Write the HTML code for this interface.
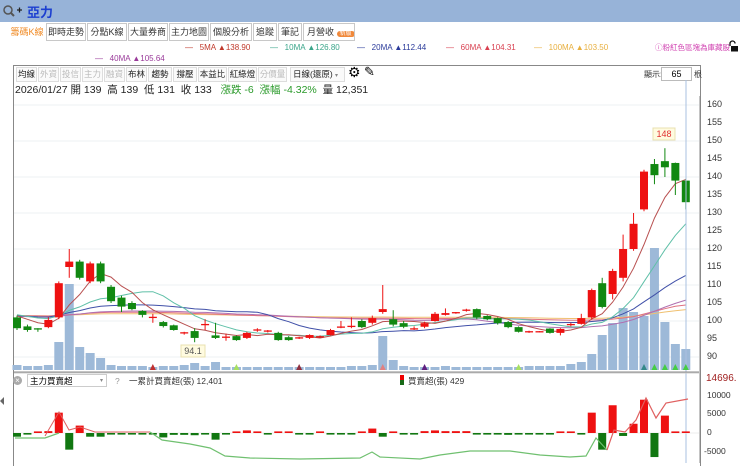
<!DOCTYPE html>
<html><head><meta charset="utf-8">
<style>
body{margin:0;width:740px;height:463px;overflow:hidden;background:#fff;font-family:"Liberation Sans","Noto Sans CJK TC",sans-serif;position:relative}
.a{position:absolute;white-space:nowrap}
.top{position:absolute;left:0;top:0;width:740px;height:22px;background:#97b3d8}
.tab{position:absolute;top:23px;height:16px;border:1px solid #c8c8c8;font-size:9px;line-height:16px;text-align:center;color:#333;background:#fff;white-space:nowrap;overflow:hidden}
.btn{position:absolute;top:67px;height:13px;border:1px solid #ddd;font-size:8.5px;line-height:13px;text-align:center;color:#222;background:#fafafa;white-space:nowrap;overflow:hidden}
.btn.d{color:#bbb}
.ax{position:absolute;left:707px;font-size:9px;color:#333}
.lg{position:absolute;top:43px;font-size:8px;white-space:nowrap}
</style></head><body>
<div class="top"></div>
<svg class="a" style="left:2px;top:4px" width="22" height="14"><circle cx="6" cy="6" r="4" fill="none" stroke="#555" stroke-width="1.5"/><line x1="9" y1="9" x2="12" y2="12" stroke="#555" stroke-width="2"/><path d="M15 6h5M17.5 3.5v5" stroke="#222" stroke-width="1.3"/></svg>
<div class="a" style="left:27px;top:2px;font-size:13px;font-weight:bold;color:#1c3fd0">亞力</div>

<div class="tab" style="left:8px;width:36px;color:#f08a24;border-color:#fff">籌碼K線</div>
<div class="tab" style="left:46px;width:38px">即時走勢</div>
<div class="tab" style="left:87px;width:38px">分點K線</div>
<div class="tab" style="left:128px;width:38px">大量券商</div>
<div class="tab" style="left:169px;width:38px">主力地圖</div>
<div class="tab" style="left:210px;width:40px">個股分析</div>
<div class="tab" style="left:253px;width:22px">追蹤</div>
<div class="tab" style="left:278px;width:22px">筆記</div>
<div class="tab" style="left:303px;width:47px;text-align:left;padding-left:3px">月營收 <span style="background:#f0883a;color:#fff;border-radius:6px;font-size:6px;padding:0 3px">新版</span></div>

<div class="lg" style="left:185px;color:#c0392b">— &nbsp; 5MA ▲138.90</div>
<div class="lg" style="left:270px;color:#3aa58a">— &nbsp; 10MA ▲126.80</div>
<div class="lg" style="left:357px;color:#2a3a9a">— &nbsp; 20MA ▲112.44</div>
<div class="lg" style="left:446px;color:#d94050">— &nbsp; 60MA ▲104.31</div>
<div class="lg" style="left:534px;color:#e8b040">— &nbsp; 100MA ▲103.50</div>
<div class="lg" style="left:655px;top:42px;color:#d040b0;font-size:7.5px">ⓘ粉紅色區塊為庫藏股</div>
<svg class="a" style="left:728px;top:40px" width="11" height="12"><path d="M2 6V3.5a2.5 2.5 0 0 1 5 0" fill="none" stroke="#111" stroke-width="1.3"/><rect x="3" y="6" width="7" height="5.5" fill="#111"/></svg>
<div class="lg" style="left:95px;top:54px;color:#9a3a9a">— &nbsp; 40MA ▲105.64</div>

<div class="a" style="left:13px;top:65px;width:686px;height:400px;border:1px solid #888;border-bottom:none"></div>
<div class="btn" style="left:16px;width:19px">均線</div>
<div class="btn d" style="left:38px;width:19px">外資</div>
<div class="btn d" style="left:60px;width:19px">投信</div>
<div class="btn d" style="left:82px;width:19px">主力</div>
<div class="btn d" style="left:104px;width:19px">融資</div>
<div class="btn" style="left:126px;width:19px">布林</div>
<div class="btn" style="left:148px;width:22px">趨勢</div>
<div class="btn" style="left:173px;width:22px">撐壓</div>
<div class="btn" style="left:198px;width:27px">本益比</div>
<div class="btn" style="left:228px;width:27px">紅綠燈</div>
<div class="btn d" style="left:258px;width:27px">分價量</div>
<div class="btn" style="left:290px;width:51px;text-align:left;padding-left:2px">日線(還原) <span style="font-size:6px;color:#888">▾</span></div>
<div class="a" style="left:348px;top:64px;font-size:14px">⚙</div>
<div class="a" style="left:364px;top:64px;font-size:13px">✎</div>
<div class="a" style="left:644px;top:69px;font-size:8px;color:#333">顯示:</div>
<div class="a" style="left:661px;top:67px;width:29px;height:12px;border:1px solid #bbb;font-size:9px;text-align:center;line-height:12px">65</div>
<div class="a" style="left:694px;top:69px;font-size:8px;color:#333">根</div>
<div class="a" style="left:15px;top:82px;font-size:10.5px;color:#222">2026/01/27 開 139 &nbsp;高 139 &nbsp;低 131 &nbsp;收 133 &nbsp; <span style="color:#2a9a2a">漲跌 -6 &nbsp;漲幅 -4.32%</span> &nbsp;量 12,351</div>

<svg class="a" id="s" style="left:0;top:0" width="740" height="463"></svg>
<div id="ax"></div>

<div class="a" style="left:13px;top:376px;width:9px;height:9px;border-radius:50%;background:#aaa;color:#fff;font-size:8px;line-height:9px;text-align:center">×</div>
<div class="a" style="left:27px;top:374px;width:80px;height:13px;border:1px solid #ccc;font-size:8.5px;line-height:13px;padding-left:2px;box-sizing:border-box">主力買賣超<span style="float:right;font-size:6px;color:#888;padding-right:3px">▾</span></div>
<div class="a" style="left:115px;top:376px;font-size:8.5px;color:#999">?</div>
<div class="a" style="left:129px;top:375px;font-size:8.5px;color:#333">一累計買賣超(張) 12,401</div>
<div class="a" style="left:400px;top:375px;width:4px;height:5px;background:#e00"></div>
<div class="a" style="left:400px;top:380px;width:4px;height:5px;background:#186a18"></div>
<div class="a" style="left:408px;top:375px;font-size:8.5px;color:#333">買賣超(張) 429</div>
<div class="a" style="left:706px;top:373px;font-size:10px;color:#a02020">14696.</div>
<div class="a" style="left:707px;top:390px;font-size:8.5px;color:#333">10000</div>
<div class="a" style="left:707px;top:408px;font-size:8.5px;color:#333">5000</div>
<div class="a" style="left:707px;top:427px;font-size:8.5px;color:#333">0</div>
<div class="a" style="left:704px;top:446px;font-size:8.5px;color:#333">-5000</div>
<div class="a" style="left:0;top:397px;width:0;height:0;border-top:4px solid transparent;border-bottom:4px solid transparent;border-right:4px solid #666"></div>

<script>
var d=[[101,98,101.5,97.5],[98.5,97.5,99,97],[97.8,97.5,98,97],[98.3,100.3,101,98],[101,110.5,111,100.5],[115,116.5,120,112],[116.5,112,117,111.5],[111,116,116.5,110.5],[116,111,116.5,110.5],[109.5,105.5,110,105],[106.5,104,107,102.5],[105,103.3,105.5,103],[102.8,101.7,103,101],[101,101,102,99.5],[99.7,98.6,100,98.2],[98.8,97.5,99,97.3],[96.7,96.7,97,96.2],[97.2,95.3,98,94.1],[99,99,100.5,97.5],[96,95.3,99.5,95],[95.5,95.5,96.5,94.5],[95.8,94.7,96,94.5],[95.3,96.7,97,95],[97.5,97.5,98,97],[97.2,97.2,97.5,96.8],[96.7,94.7,97,94.5],[95.5,94.7,95.8,94.5],[95.3,95.3,95.6,95],[95.3,96.1,96.3,95],[95.6,95.6,96,95.3],[96.1,97.5,97.8,96],[98.3,98.3,100,98],[98.5,98.5,101,98],[100,98.3,100.5,98],[99.5,100.8,101.5,99],[102.5,103.3,110,102],[100.5,99,103,98.5],[99.4,98.4,100,98],[97.8,97.8,98.5,97.5],[98.4,99.4,99.8,98],[100,102,102.5,99.8],[101.7,102.2,103.5,101.5],[102.3,102.3,102.5,102],[103,103,103.4,102.6],[103.3,101,103.5,100.5],[101.4,100.5,101.6,100.2],[100.8,99.4,101,99],[99.7,98.3,100,98],[98.3,97,98.5,96.8],[97,97,97.3,96.7],[97,97,97.2,96.8],[97.9,96.7,98,96.5],[96.7,97.8,98,96],[99,99,99.5,98.5],[99.2,100.8,102,99],[101,108.6,109,100.5],[110.5,103.9,112,103.5],[107.5,113.9,114.5,106],[112,120,124,111],[120,127,130,119.5],[131,141.5,142,130.5],[143.6,140.5,145,138],[144.4,142.7,148,140],[143.9,139,144,135],[139,133,139.5,131]];
var vol=[5,4,4,5,28,86,23,17,12,5,4,4,4,3,4,4,5,7,4,8,3,3,3,3,3,3,3,3,3,3,3,3,4,4,5,34,10,4,3,3,3,4,3,3,3,3,3,3,3,4,4,4,4,6,8,16,35,47,62,58,54,122,48,26,21];
var bs=[-1,-0.3,0.3,0.5,5.5,-4.5,2,-1,-1,-0.3,-0.3,-0.3,-0.3,-0.3,-1.2,-0.5,-0.5,-0.6,-0.4,-1.8,-0.3,0.3,0.7,0.3,-0.3,0.2,0.2,-0.3,-0.3,0.2,-0.2,-0.2,-0.2,0.2,1.2,-1,0.3,-0.3,-0.3,0.5,0.7,0.5,0.5,0.5,-0.3,-0.3,-0.3,-0.5,-0.3,-0.3,-0.3,-0.3,0.2,0.3,-0.2,5.5,-4.5,7.5,-0.8,2.5,9,-6.5,4.7,0.4,0.4];
var X=i=>17+i*10.45,Y=p=>105+(160-p)*3.6,s='';
function L(x1,y1,x2,y2,c,w){s+=`<line x1="${x1}" y1="${y1}" x2="${x2}" y2="${y2}" stroke="${c}" stroke-width="${w||1}"/>`}
for(var p=90;p<=160;p+=10)L(14,Y(p),699,Y(p),'#eef0f3');
var ax='';for(p=90;p<=160;p+=5)ax+=`<div class="ax" style="top:${Y(p)-6}px">${p}</div>`;
document.getElementById('ax').innerHTML=ax;
L(700,96,700,463,'#888');
for(var i=0;i<65;i++){var h=vol[i];s+=`<rect x="${X(i)-4.5}" y="${370-h}" width="9" height="${h}" fill="#9db9d8"/>`}
var cl=d.map(a=>a[1]),pad=[];for(i=0;i<100;i++)pad.push(101.5+Math.sin(i/7)*0.8);var all=pad.concat(cl);
function ma(n,c){var pts=[];for(var i=0;i<65;i++){var t=0;for(var k=0;k<n;k++)t+=all[100+i-k];pts.push(X(i)+','+Y(t/n).toFixed(1))}s+=`<polyline points="${pts.join(' ')}" fill="none" stroke="${c}" stroke-width="1"/>`}
ma(100,'#f0c070');ma(60,'#e07080');ma(40,'#b070b0');ma(20,'#4050a8');ma(10,'#60c0a8');ma(5,'#b85050');
for(i=0;i<65;i++){var o=d[i][0],c=d[i][1],hi=d[i][2],lo=d[i][3],up=c>=o,col=up?'#ee1111':'#118811',x=X(i);
L(x,Y(hi),x,Y(lo),col);var t=Y(Math.max(o,c)),b=Y(Math.min(o,c));if(b-t<1.2){L(x-4,t,x+4,t,col,1.3)}else s+=`<rect x="${x-4}" y="${t}" width="8" height="${b-t}" fill="${col}"/>`}
L(686,80,686,463,'#aac0e0');
s+=`<rect x="653" y="128" width="22" height="12" fill="#fffbe0" stroke="#e8e0b0"/><text x="664" y="137" font-size="9" fill="#e03030" text-anchor="middle">148</text>`;
s+=`<rect x="181" y="345" width="24" height="12" fill="#fffbe0" stroke="#e8e0b0"/><text x="193" y="354" font-size="9" fill="#555" text-anchor="middle">94.1</text>`;
[[13,'#c03030'],[21,'#a8e060'],[27,'#903040'],[35,'#e08080'],[39,'#602080'],[48,'#a8e060'],[60,'#338888'],[62,'#44cc44'],[63,'#44cc44'],[64,'#44cc44'],[61,'#44cc44']].forEach(q=>{var x=X(q[0]);s+=`<polygon points="${x-3},370 ${x+3},370 ${x},364" fill="${q[1]}"/>`});
L(14,372,699,372,'#888');L(14,373,699,373,'#ccc');
var Z=433,sc=3.7;L(14,Z,699,Z,'#eee');
for(i=0;i<65;i++){var v=bs[i],x=X(i),hh=Math.max(Math.abs(v)*sc,1.6);s+=`<rect x="${x-4}" y="${v>0?Z-hh:Z}" width="8" height="${hh}" fill="${v>0?'#ee1111':'#117711'}"/>`}
s+=`<polyline points="15,438 45,438 59,433" fill="none" stroke="#70c070" stroke-width="1.2"/>`;
s+=`<polyline points="45,436 59,412 69,430 80,427 95,432 150,432" fill="none" stroke="#e06060" stroke-width="1"/>`;
s+=`<polyline points="150,432 162,440 190,444 210,448 225,456 250,458 300,459 360,458 372,452 380,457 420,459 440,455 470,451 510,451 540,455 570,457 586,456 596,438 607,450" fill="none" stroke="#70c070" stroke-width="1.2"/>`;
s+=`<polyline points="607,450 614,430 625,432 636,420 646,398 656,418 666,403 688,399" fill="none" stroke="#e06060" stroke-width="1.2"/>`;
document.getElementById('s').innerHTML=s;
</script>
</body></html>
